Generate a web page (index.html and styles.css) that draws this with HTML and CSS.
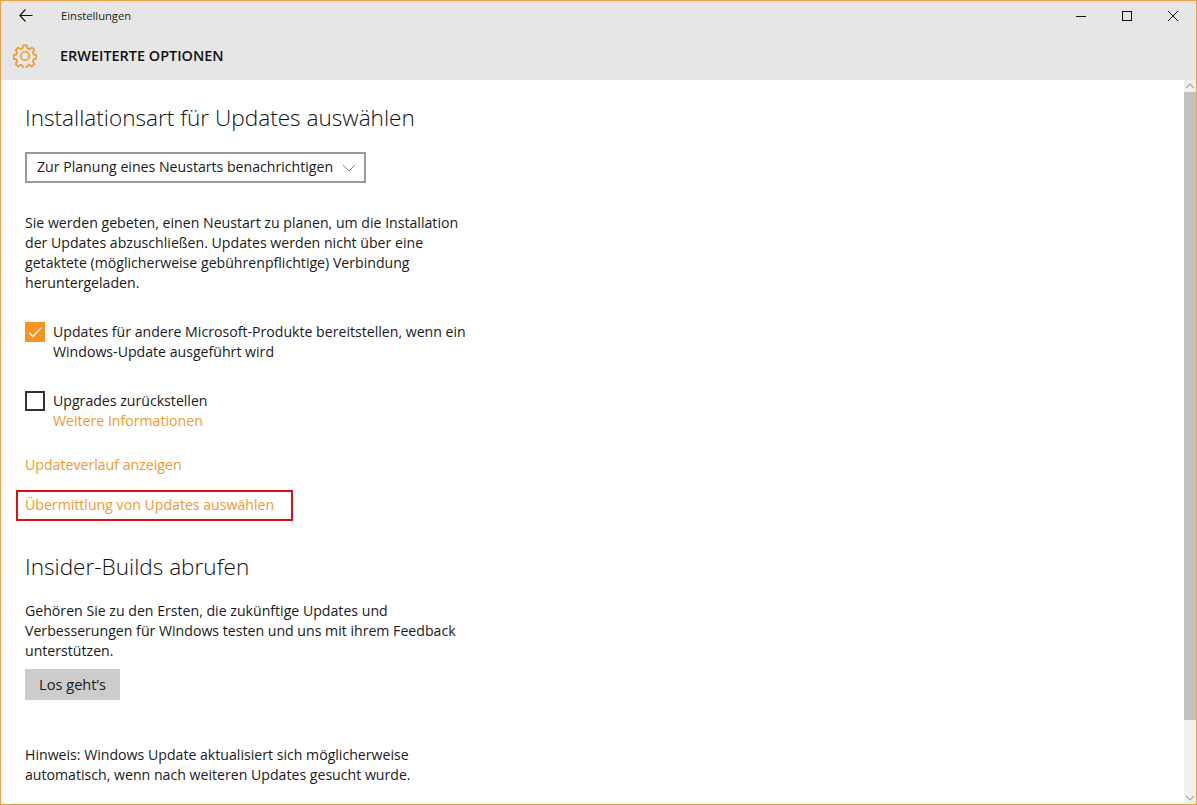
FILE: index.html
```html
<!DOCTYPE html>
<html lang="de">
<head>
<meta charset="utf-8">
<title>Einstellungen</title>
<link rel="stylesheet" href="styles.css">
</head>
<body>
<div class="window">
  <header class="chrome">
    <div class="titlebar">
      <svg class="back" width="14" height="13" viewBox="0 0 14 13"><path d="M6.5 .5 .8 6.5l5.7 6M.8 6.5h12.7" fill="none" stroke="#111" stroke-width="1.1"/></svg>
      <span class="apptitle">Einstellungen</span>
      <div class="controls">
        <svg class="ctl" width="12" height="12" viewBox="0 0 12 12"><path d="M1 6.5h10" stroke="#111" fill="none"/></svg>
        <svg class="ctl" width="12" height="12" viewBox="0 0 12 12"><rect x="1.5" y="1.5" width="9" height="9" stroke="#111" fill="none"/></svg>
        <svg class="ctl" width="12" height="12" viewBox="0 0 12 12"><path d="M1 1l10 10M11 1 1 11" stroke="#111" fill="none"/></svg>
      </div>
    </div>
    <div class="pagebar">
      <svg class="gear" width="24" height="24" viewBox="0 0 26 26"><path d="M11 1.5h4l.6 3.2 2.2.9 2.7-1.8 2.8 2.8-1.8 2.7.9 2.2 3.1.6v4l-3.1.6-.9 2.2 1.8 2.7-2.8 2.8-2.7-1.8-2.2.9-.6 3.2h-4l-.6-3.2-2.2-.9-2.7 1.8-2.8-2.8 1.8-2.7-.9-2.2-3.1-.6v-4l3.1-.6.9-2.2-1.8-2.7 2.8-2.8 2.7 1.8 2.2-.9z" fill="none" stroke="#ef9a2e" stroke-width="1.8" stroke-linejoin="round"/><circle cx="13" cy="13" r="4.6" fill="none" stroke="#ef9a2e" stroke-width="1.8"/></svg>
      <h1 class="pagetitle">ERWEITERTE OPTIONEN</h1>
    </div>
  </header>
  <div class="body">
    <main class="content">
      <h2 class="heading first">Installationsart für Updates auswählen</h2>
      <div class="select">
        <span class="select-label">Zur Planung eines Neustarts benachrichtigen</span>
        <svg width="14" height="8" viewBox="0 0 14 8"><path d="M1 1l6 6 6-6" fill="none" stroke="#888" stroke-width="1"/></svg>
      </div>
      <p class="text para1">Sie werden gebeten, einen Neustart zu planen, um die Installation<br>der Updates abzuschließen. Updates werden nicht über eine<br>getaktete (möglicherweise gebührenpflichtige) Verbindung<br>heruntergeladen.</p>
      <label class="check check1">
        <span class="box on"><svg width="20" height="20" viewBox="0 0 20 20"><path d="M4 10.5l4 4 8.5-9" fill="none" stroke="#fff" stroke-width="1.3"/></svg></span>
        <span class="text">Updates für andere Microsoft-Produkte bereitstellen, wenn ein<br>Windows-Update ausgeführt wird</span>
      </label>
      <label class="check check2">
        <span class="box"></span>
        <span class="text">Upgrades zurückstellen<br><a class="link">Weitere Informationen</a></span>
      </label>
      <a class="link block history">Updateverlauf anzeigen</a>
      <a class="link block delivery">Übermittlung von Updates auswählen<span class="mark"></span></a>
      <h2 class="heading second">Insider-Builds abrufen</h2>
      <p class="text para2">Gehören Sie zu den Ersten, die zukünftige Updates und<br>Verbesserungen für Windows testen und uns mit ihrem Feedback<br>unterstützen.</p>
      <button class="btn">Los geht’s</button>
      <p class="text note">Hinweis: Windows Update aktualisiert sich möglicherweise<br>automatisch, wenn nach weiteren Updates gesucht wurde.</p>
    </main>
    <div class="scrollbar">
      <div class="arrow"><svg width="10" height="6" viewBox="0 0 10 6"><path d="M1 5l4-4 4 4" fill="none" stroke="#aaa" stroke-width="1.2"/></svg></div>
      <div class="thumb"></div>
      <div class="track"></div>
      <div class="arrow"><svg width="10" height="6" viewBox="0 0 10 6"><path d="M1 1l4 4 4-4" fill="none" stroke="#aaa" stroke-width="1.2"/></svg></div>
    </div>
  </div>
</div>
</body>
</html>
```
FILE: styles.css
```css
* { box-sizing: border-box; }
html, body { margin: 0; height: 100%; overflow: hidden; }
body { font-family: "Open Sans", "Noto Sans", sans-serif; font-size: 14.13px; color: #1a1a1a; background: #fff; }
.window { height: 805px; border: 1px solid #f0a040; display: flex; flex-direction: column; }
.chrome { background: #e6e6e6; height: 79px; flex: none; }
.titlebar { height: 30px; display: flex; align-items: center; padding-left: 18px; }
.back { flex: none; margin-bottom: 1px; }
.apptitle { font-size: 11.2px; margin-left: 28px; margin-bottom: 2px; color: #222; }
.controls { margin-left: auto; display: flex; gap: 34px; padding-right: 17px; }
.pagebar { height: 49px; display: flex; align-items: center; padding-left: 12px; }
.gear { flex: none; }
.pagetitle { margin: 0 0 0 23px; font-size: 14.45px; font-weight: 600; color: #111; }
.body { flex: 1; display: flex; min-height: 0; }
.content { flex: 1; padding-left: 24px; min-width: 0; }
.heading { margin: 0; font-weight: 300; font-size: 22.6px; line-height: 28px; color: #111; }
.first { margin-top: 24px; }
.select { width: 341px; height: 31px; margin-top: 20px; border: 2px solid #999; display: flex; align-items: center; justify-content: space-between; padding: 0 8px 0 10px; white-space: nowrap; }
.select-label { margin-bottom: 2px; }
.text { margin: 0; line-height: 20px; }
.para1 { margin-top: 30px; }
.check { display: flex; align-items: flex-start; gap: 8px; }
.check1 { margin-top: 29px; }
.check2 { margin-top: 29px; }
.box { flex: none; width: 20px; height: 20px; border: 2px solid #333; }
.box.on { border: 0; background: #f7931e; }
.box svg { display: block; }
.link { color: #ef9a2e; }
.block { display: block; line-height: 20px; width: max-content; }
.history { margin-top: 24px; }
.delivery { margin-top: 20px; position: relative; }
.mark { position: absolute; left: -9px; top: -5px; width: 277px; height: 31px; border: 2px solid #e00b16; }
.second { margin-top: 38px; }
.para2 { margin-top: 20px; }
.btn { display: block; width: 95px; height: 31px; margin: 8px 0 0; border: 0; padding: 0 0 2px; background: #ccc; font: inherit; font-size: 14.6px; color: #1a1a1a; }
.note { margin-top: 45px; }
.scrollbar { width: 12px; flex: none; background: #f0f0f0; display: flex; flex-direction: column; }
.arrow { height: 12px; display: flex; align-items: center; justify-content: center; flex: none; }
.thumb { height: 628px; background: #c2c2c2; flex: none; }
.track { flex: 1; }
```
